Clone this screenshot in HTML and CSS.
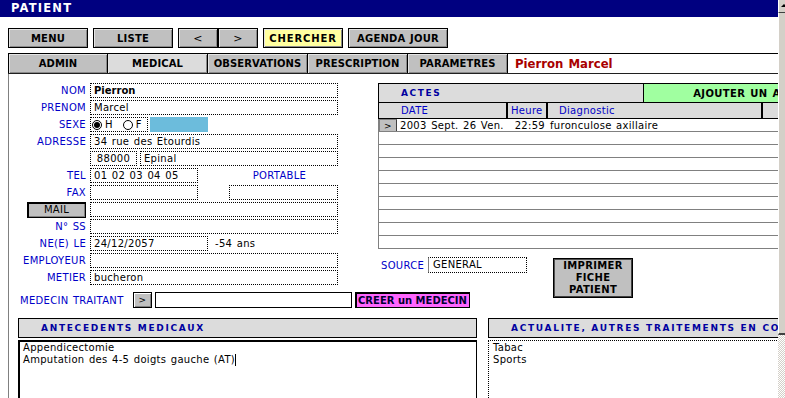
FILE: index.html
```html
<!DOCTYPE html>
<html lang="fr">
<head>
<meta charset="utf-8">
<title>PATIENT</title>
<link rel="stylesheet" href="styles.css">
</head>
<body>
<div class="screen">
  <div class="main">
    <div class="titlebar">PATIENT</div>

    <div class="toolbar">
      <div class="btn w80">MENU</div>
      <div class="btn w80">LISTE</div>
      <div class="pair">
        <div class="btn w40 arrow">&lt;</div>
        <div class="btn w40 arrow">&gt;</div>
      </div>
      <div class="btn w80 yellow">CHERCHER</div>
      <div class="btn w100">AGENDA JOUR</div>
    </div>

    <div class="tabs">
      <div class="tab first">ADMIN</div>
      <div class="tab active">MEDICAL</div>
      <div class="tab">OBSERVATIONS</div>
      <div class="tab">PRESCRIPTION</div>
      <div class="tab">PARAMETRES</div>
      <div class="patient-name">Pierron Marcel</div>
    </div>

    <div class="content">
      <div class="grid">
        <div class="form">
          <div class="row"><span class="lbl">NOM</span><span class="fld full strong">Pierron</span></div>
          <div class="row"><span class="lbl">PRENOM</span><span class="fld full">Marcel</span></div>
          <div class="row"><span class="lbl">SEXE</span><span class="fld sexe"><span class="radio on"></span><span class="rtxt">H</span><span class="radio"></span><span class="rtxt">F</span></span><span class="bluebox"></span></div>
          <div class="row"><span class="lbl">ADRESSE</span><span class="fld full">34 rue des Etourdis</span></div>
          <div class="row"><span class="lbl"></span><span class="fld cp">88000</span><span class="fld city">Epinal</span></div>
          <div class="row"><span class="lbl">TEL</span><span class="fld tel">01 02 03 04 05</span><span class="sublbl">PORTABLE</span></div>
          <div class="row"><span class="lbl">FAX</span><span class="fld tel"></span><span class="fld port"></span></div>
          <div class="row"><span class="lbl"><span class="mail">MAIL</span></span><span class="fld full"></span></div>
          <div class="row"><span class="lbl">N° SS</span><span class="fld full"></span></div>
          <div class="row"><span class="lbl">NE(E) LE</span><span class="fld birth">24/12/2057</span><span class="age">-54 ans</span></div>
          <div class="row"><span class="lbl">EMPLOYEUR</span><span class="fld full"></span></div>
          <div class="row"><span class="lbl">METIER</span><span class="fld full">bucheron</span></div>
        </div>

        <div class="actes">
          <div class="actes-head"><span class="actes-title">ACTES</span><span class="add">AJOUTER UN ACTE</span></div>
          <div class="cols"><span class="c-date">DATE</span><span class="c-heure">Heure</span><span class="c-diag">Diagnostic</span><span class="c-x"></span></div>
          <div class="arow"><span class="rb">&gt;</span><span class="d">2003 Sept. 26 Ven.</span><span class="h">22:59</span><span class="g">furonculose axillaire</span></div>
          <div class="arow"></div>
          <div class="arow"></div>
          <div class="arow"></div>
          <div class="arow"></div>
          <div class="arow"></div>
          <div class="arow"></div>
          <div class="arow"></div>
          <div class="arow"></div>
          <div class="arow"></div>
        </div>

        <div class="source"><span class="lbl-s">SOURCE</span><span class="fld src">GENERAL</span></div>

        <div class="print">IMPRIMER<br>FICHE<br>PATIENT</div>

        <div class="medecin">
          <span class="med-lbl">MEDECIN TRAITANT</span>
          <span class="smallbtn">&gt;</span>
          <span class="med-fld"></span>
          <span class="creer">CREER un MEDECIN</span>
        </div>
      </div>

      <div class="panels">
        <div class="panel">
          <div class="panel-head">ANTECEDENTS MEDICAUX</div>
          <div class="panel-body solid">Appendicectomie<br>Amputation des 4-5 doigts gauche (AT)<span class="caret"></span></div>
        </div>
        <div class="panel">
          <div class="panel-head">ACTUALITE, AUTRES TRAITEMENTS EN COURS</div>
          <div class="panel-body dotted">Tabac<br>Sports</div>
        </div>
      </div>
    </div>
  </div>

  <div class="scrollbar">
    <div class="sb-up"><span class="tri"></span></div>
    <div class="sb-thumb"></div>
    <div class="sb-track"></div>
  </div>
</div>
</body>
</html>
```

FILE: styles.css
```css
* { box-sizing: border-box; }

html, body {
  margin: 0;
  padding: 0;
  background: #fff;
}

body {
  font-family: "DejaVu Sans", Verdana, sans-serif;
  font-size: 10px;
  letter-spacing: 0.3px;
  word-spacing: 1px;
  color: #000;
  width: 785px;
  height: 398px;
  overflow: hidden;
}

.screen {
  display: flex;
  width: 785px;
  height: 398px;
}

.main {
  width: 778px;
  height: 398px;
  overflow: hidden;
  flex: none;
}

/* title bar */
.titlebar {
  height: 17px;
  background: #000080;
  color: #fff;
  font-weight: bold;
  font-size: 11.5px;
  letter-spacing: 1.2px;
  padding-left: 11px;
  line-height: 17px;
}

/* toolbar */
.toolbar {
  display: flex;
  gap: 5px;
  margin-top: 11px;
  padding-left: 8px;
  height: 20px;
}

.btn {
  display: flex;
  align-items: center;
  justify-content: center;
  height: 20px;
  background: #c0c0c0;
  border: 1px solid #000;
  box-shadow: inset 1px 1px #e4e4e4, inset -1px -1px #8a8a8a;
  font-weight: bold;
  font-size: 10px;
  letter-spacing: 0.2px;
  white-space: nowrap;
}

.w80 { width: 80px; }
.w40 { width: 40px; }
.w100 { width: 100px; }

.arrow { font-weight: normal; font-size: 11px; }

.pair { display: flex; }

.yellow {
  background: #ffffa0;
  letter-spacing: 0.9px;
}

/* tabs */
.tabs {
  display: flex;
  margin-top: 5px;
  margin-left: 8px;
  height: 21px;
  border-top: 1px solid #000;
  border-bottom: 1px solid #202020;
}

.tab {
  width: 100px;
  display: flex;
  align-items: center;
  justify-content: center;
  background: #c0c0c0;
  border-right: 1px solid #000;
  box-shadow: inset 1px 1px #e4e4e4, inset -1px -1px #8a8a8a;
  font-weight: bold;
  letter-spacing: 0.1px;
  white-space: nowrap;
}

.tab.first { border-left: 1px solid #000; }
.tab.active { background: #dcdcdc; }

.patient-name {
  margin-left: 7px;
  color: #a80000;
  font-weight: bold;
  font-size: 11.7px;
  letter-spacing: 0;
  display: flex;
  align-items: center;
}

/* content */
.content {
  margin-left: 8px;
  border-left: 1px solid #808080;
  padding-top: 9px;
  height: 324px;
}

.grid {
  display: grid;
  grid-template-columns: 369px 175px 300px;
  grid-template-rows: 166px 41px 19px;
  grid-template-areas:
    "form actes actes"
    "form source print"
    "med  med    print";
}

/* form */
.form {
  grid-area: form;
  display: flex;
  flex-direction: column;
  gap: 2px;
}

.row {
  display: flex;
  align-items: center;
  height: 15px;
}

.lbl {
  width: 77px;
  margin-right: 4px;
  text-align: right;
  color: #0000c8;
  white-space: nowrap;
  display: flex;
  justify-content: flex-end;
}

.fld {
  display: block;
  height: 15px;
  border: 1px dotted #000;
  padding: 0 3px;
  line-height: 13px;
  white-space: nowrap;
  overflow: hidden;
  background: #fff;
}

.full { width: 248px; }
.strong { font-weight: bold; letter-spacing: 0; }
.cp { width: 47px; text-align: center; padding: 0; }
.city { width: 198px; margin-left: 3px; }
.tel { width: 108px; }
.port { width: 109px; margin-left: 31px; }
.birth { width: 118px; }

.sublbl {
  width: 109px;
  margin-left: 31px;
  padding-right: 8px;
  text-align: center;
  color: #0000c8;
}

.age { margin-left: 7px; }

.sexe {
  width: 58px;
  display: flex;
  align-items: center;
  padding: 0 0 0 1px;
}

.radio {
  width: 10px;
  height: 10px;
  border: 1px solid #000;
  border-radius: 50%;
  display: inline-flex;
  align-items: center;
  justify-content: center;
  background: #fff;
  flex: none;
}

.radio.on::after {
  content: "";
  width: 6px;
  height: 6px;
  border-radius: 50%;
  background: #000;
}

.rtxt { margin-left: 3px; margin-right: 10px; }

.bluebox {
  width: 58px;
  height: 15px;
  margin-left: 2px;
  background: #6cbcdc;
}

.mail {
  width: 59px;
  height: 16px;
  display: flex;
  align-items: center;
  justify-content: center;
  background: #c0c0c0;
  color: #000;
  border: 1px solid #000;
  box-shadow: inset 1px 1px #000, inset -1px -1px #808080;
}

/* actes */
.actes {
  grid-area: actes;
  width: 475px;
  border-left: 1px solid #808080;
}

.actes-head {
  display: flex;
  height: 20px;
  border: 1px solid #000;
  margin-left: -1px;
  background: #dcdcdc;
}

.actes-title {
  width: 264px;
  padding-left: 22px;
  display: flex;
  align-items: center;
  color: #0000a0;
  font-weight: bold;
  font-size: 9px;
  letter-spacing: 1.6px;
}

.add {
  flex: 1;
  display: flex;
  align-items: center;
  justify-content: center;
  background: #a0ffa0;
  border-left: 1px solid #000;
  font-weight: bold;
  letter-spacing: 0.4px;
  white-space: nowrap;
}

.cols {
  display: flex;
  height: 16px;
  margin-left: -1px;
  border-left: 1px solid #000;
  border-bottom: 1px solid #000;
  background: #dcdcdc;
  color: #0000c8;
  line-height: 15px;
}

.c-date { width: 129px; padding-left: 22px; border-right: 2px solid #000; }
.c-heure { width: 40px; padding-left: 3px; border-right: 2px solid #000; }
.c-diag { width: 215px; padding-left: 11px; border-right: 2px solid #000; }
.c-x { flex: 1; }

.arow {
  display: flex;
  align-items: center;
  height: 13px;
  border-bottom: 1px solid #808080;
  white-space: nowrap;
}

.rb {
  width: 18px;
  height: 12px;
  display: flex;
  align-items: center;
  justify-content: center;
  background: #c0c0c0;
  border: 1px solid #808080;
  border-right-color: #404040;
  border-bottom: none;
  font-size: 9px;
}

.d { width: 111px; padding-left: 3px; }
.h { width: 40px; text-align: right; padding-right: 3px; }
.g { padding-left: 2px; }

/* source */
.source {
  grid-area: source;
  display: flex;
  align-items: center;
  margin-top: 8px;
  padding-left: 3px;
  height: 16px;
  align-self: start;
}

.lbl-s { color: #0000c8; width: 47px; }

.src {
  width: 99px;
  height: 16px;
  line-height: 14px;
  padding-left: 4px;
  border-left: 1px solid #808080;
}

/* print button */
.print {
  grid-area: print;
  align-self: start;
  margin-top: 9px;
  width: 80px;
  height: 40px;
  display: flex;
  align-items: center;
  justify-content: center;
  text-align: center;
  background: #c0c0c0;
  border: 1px solid #000;
  box-shadow: inset 1px 1px #505050, inset -1px -1px #404040;
  font-weight: bold;
  line-height: 11.7px;
  letter-spacing: 0.3px;
}

/* medecin traitant */
.medecin {
  grid-area: med;
  display: flex;
  align-items: center;
  margin-top: 2px;
  padding-left: 11px;
  height: 16px;
  align-self: start;
}

.med-lbl {
  width: 113px;
  color: #0000c8;
  white-space: nowrap;
}

.smallbtn {
  width: 19px;
  height: 16px;
  display: flex;
  align-items: center;
  justify-content: center;
  background: #c0c0c0;
  border: 1px solid #000;
  box-shadow: inset 1px 1px #fff, inset -1px -1px #808080;
  font-size: 9px;
}

.med-fld {
  width: 197px;
  height: 16px;
  margin-left: 3px;
  border: 1px solid #000;
}

.creer {
  width: 115px;
  height: 16px;
  margin-left: 3px;
  display: flex;
  align-items: center;
  justify-content: center;
  background: #ff66ff;
  border: 1px solid #000;
  box-shadow: inset 1px 1px #000;
  font-weight: bold;
  letter-spacing: 0;
  word-spacing: 0;
  color: #000030;
  white-space: nowrap;
}

/* bottom panels */
.panels {
  display: flex;
  gap: 11px;
  margin-top: 9px;
  padding-left: 9px;
}

.panel {
  width: 459px;
  flex: none;
}

.panel-head {
  height: 20px;
  border: 1px solid #000;
  background: #dcdcdc;
  color: #0000a0;
  font-weight: bold;
  font-size: 9px;
  letter-spacing: 1.7px;
  word-spacing: 0;
  padding-left: 22px;
  line-height: 18px;
  white-space: nowrap;
  overflow: hidden;
}

.panel-body {
  margin-top: 2px;
  height: 80px;
  padding: 1px 4px;
  line-height: 12px;
}

.panel-body.solid {
  border: 1px solid #000;
  box-shadow: inset 1px 1px #000;
}

.panel-body.dotted {
  border: 1px dotted #000;
}

.caret {
  display: inline-block;
  width: 1px;
  height: 12px;
  background: #000;
  vertical-align: top;
}

/* fake scrollbar */
.scrollbar {
  width: 7px;
  height: 398px;
  display: flex;
  flex-direction: column;
  flex: none;
}

.sb-up {
  height: 13px;
  background: #d4d0c8;
  border-left: 1px solid #fff;
  border-bottom: 1px solid #404040;
  padding-top: 4px;
  padding-left: 2px;
}

.tri {
  display: block;
  width: 0;
  height: 0;
  border-left: 3px solid transparent;
  border-right: 3px solid transparent;
  border-bottom: 3px solid #000;
}

.sb-thumb {
  height: 322px;
  background: #d4d0c8;
  border-left: 1px solid #fff;
  border-bottom: 2px solid #404040;
}

.sb-track {
  flex: 1;
  background: repeating-conic-gradient(#ffffff 0 25%, #d4d0c8 0 50%) 0 0 / 2px 2px;
}
```
